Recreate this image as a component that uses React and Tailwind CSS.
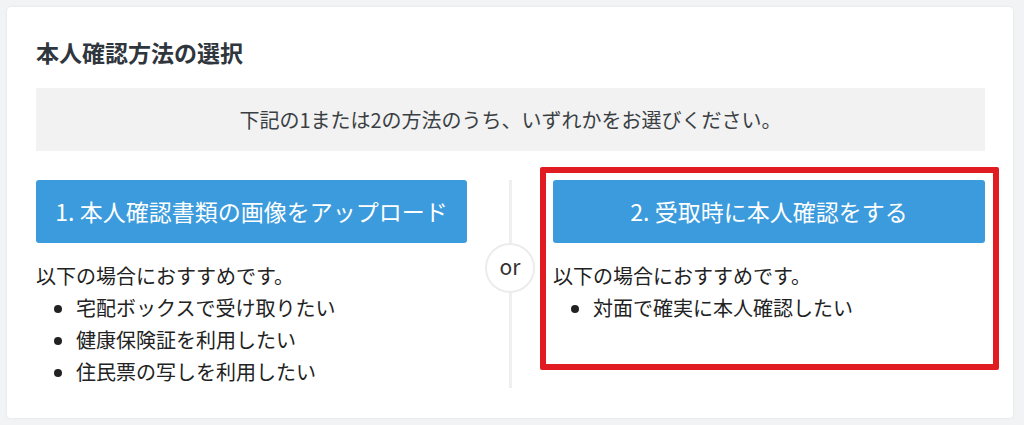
export default function App() {
  const font = { fontFamily: '"Noto Sans CJK JP", "Noto Sans", sans-serif' }
  return (
    <div
      className="min-h-screen bg-[#f2f3f5] p-[7px] pr-[11px] text-[#222]"
      style={font}
    >
      <div className="rounded-[4px] bg-white px-[29px] pb-[30px] pr-[28px] pt-[30px] shadow-[0_0_3px_rgba(0,0,0,0.08)]">
        <h2 className="mb-[21px] text-[23px] font-bold leading-[30px] text-[#2f363d]">
          本人確認方法の選択
        </h2>
        <div className="flex h-[63px] items-center justify-center bg-[#f2f2f2] text-[20px] text-[#3a3f44]">
          下記の1または2の方法のうち、いずれかをお選びください。
        </div>

        <div className="mt-[29px] grid grid-cols-[431px_1fr_432px]">
          <div>
            <button className="flex h-[63px] w-full items-center justify-center rounded-[3px] bg-[#3b9bdd] text-[23px] text-white">
              1. 本人確認書類の画像をアップロード
            </button>
            <p className="mt-[17px] text-[20px] leading-[32px]">以下の場合におすすめです。</p>
            <ul className="list-disc pl-[40px] text-[20px] leading-[32px]">
              <li>宅配ボックスで受け取りたい</li>
              <li>健康保険証を利用したい</li>
              <li>住民票の写しを利用したい</li>
            </ul>
          </div>

          <div className="relative flex justify-center">
            <div className="w-[3px] bg-[#efefef]" />
            <div className="absolute left-1/2 top-[63px] flex h-[50px] w-[50px] -translate-x-1/2 items-center justify-center rounded-full border-2 border-[#ececec] bg-white pb-[3px] text-[21px] text-[#333]">
              or
            </div>
          </div>

          <div className="relative">
            <button className="flex h-[63px] w-full items-center justify-center rounded-[3px] bg-[#3b9bdd] text-[23px] text-white">
              2. 受取時に本人確認をする
            </button>
            <p className="mt-[17px] text-[20px] leading-[32px]">以下の場合におすすめです。</p>
            <ul className="list-disc pl-[40px] text-[20px] leading-[32px]">
              <li>対面で確実に本人確認したい</li>
            </ul>
            <div className="pointer-events-none absolute bottom-[18px] left-[-13px] right-[-14px] top-[-13px] rounded-[2px] border-[6px] border-[#e11b22]" />
          </div>
        </div>
      </div>
    </div>
  )
}
